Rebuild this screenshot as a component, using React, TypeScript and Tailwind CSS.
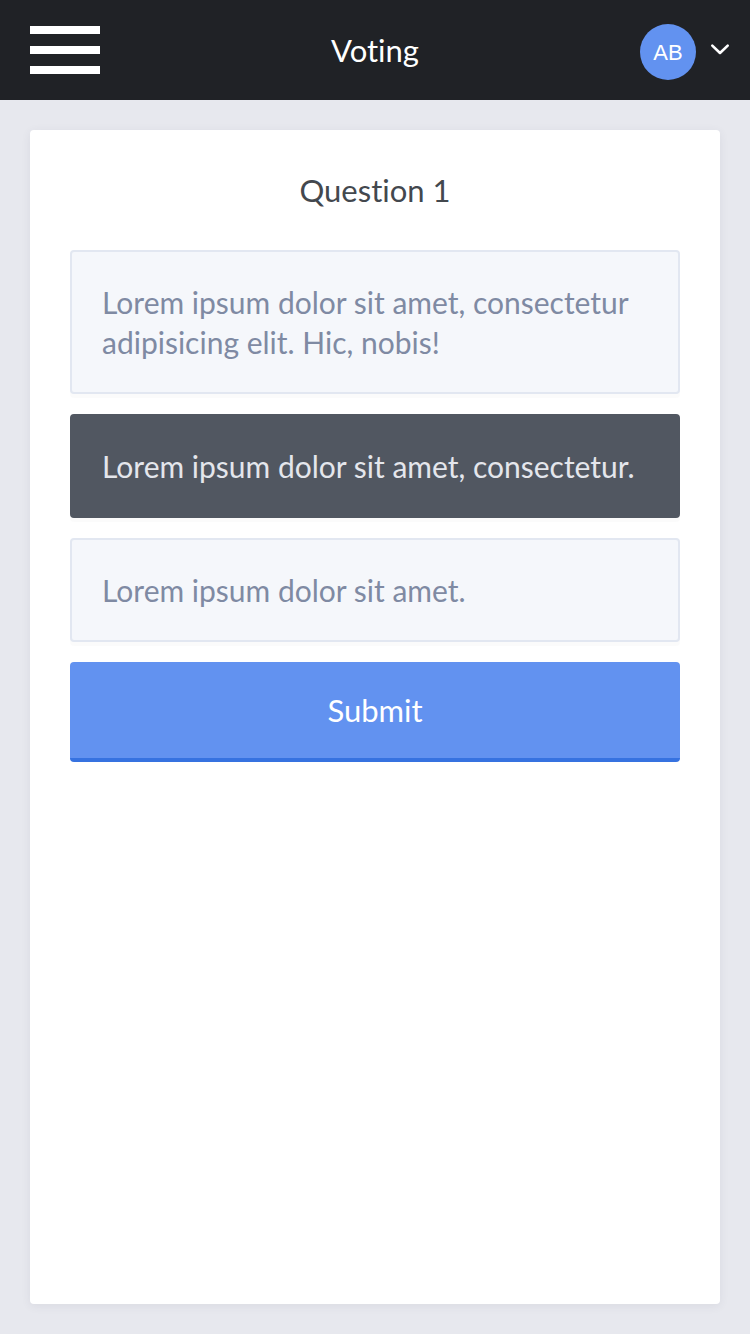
import { useState } from "react";

const options = [
  "Lorem ipsum dolor sit amet, consectetur adipisicing elit. Hic, nobis!",
  "Lorem ipsum dolor sit amet, consectetur.",
  "Lorem ipsum dolor sit amet.",
];

function Header() {
  return (
    <header className="grid grid-cols-[1fr_auto_1fr] items-start bg-[#202226] px-5 pt-6 pb-5 text-white">
      <button type="button" aria-label="Open menu" className="flex w-[90px] flex-col gap-3 px-2.5 py-0.5">
        <span className="h-2 w-full bg-white" />
        <span className="h-2 w-full bg-white" />
        <span className="h-2 w-full bg-white" />
      </button>
      <h1 className="text-[31px] leading-[52px]">Voting</h1>
      <button type="button" aria-label="AB account" className="flex items-center gap-3.5 justify-self-end">
        <span className="flex size-14 items-center justify-center rounded-full bg-[#6292f0] font-['Liberation_Sans',sans-serif] text-[22px]">
          AB
        </span>
        <svg
          viewBox="0 0 20 20"
          className="size-5"
          fill="none"
          stroke="currentColor"
          strokeWidth="2.6"
          strokeLinecap="round"
          strokeLinejoin="round"
          aria-hidden="true"
        >
          <path d="M2.3 3.6 10 11 17.7 3.6" />
        </svg>
      </button>
    </header>
  );
}

function Option({ text, checked, onSelect }: { text: string; checked: boolean; onSelect: () => void }) {
  return (
    <label className="block cursor-pointer rounded-sm border-2 border-[#e2e7f1] bg-[#f5f7fb] p-[30px] text-[30px] leading-10 text-[#7f8aa3] shadow-[0_4px_0_rgba(0,0,0,0.015)] has-checked:border-[#515761] has-checked:bg-[#515761] has-checked:text-[#e4e6ec]">
      <input type="radio" name="answer" className="sr-only" checked={checked} onChange={onSelect} />
      {text}
    </label>
  );
}

export default function App() {
  const [selected, setSelected] = useState(1);

  return (
    <div className="flex min-h-screen flex-col bg-[#e7e8ee] font-[Lato,sans-serif] [font-variant-ligatures:no-common-ligatures]">
      <Header />
      <main className="flex flex-1 flex-col p-[30px]">
        <form
          onSubmit={(event) => event.preventDefault()}
          className="flex-1 rounded-sm bg-white p-10 shadow-[0_2px_10px_rgba(60,60,90,0.08)]"
        >
          <fieldset className="flex flex-col gap-5">
            <legend className="mb-10 w-full text-center text-[31px] leading-10 text-[#43484e]">Question 1</legend>
            {options.map((text, index) => (
              <Option key={text} text={text} checked={selected === index} onSelect={() => setSelected(index)} />
            ))}
          </fieldset>
          <button
            type="submit"
            className="mt-5 block w-full rounded-sm border-b-4 border-[#3672e0] bg-[#6292f0] py-7 text-[31px] leading-10 text-white"
          >
            Submit
          </button>
        </form>
      </main>
    </div>
  );
}
